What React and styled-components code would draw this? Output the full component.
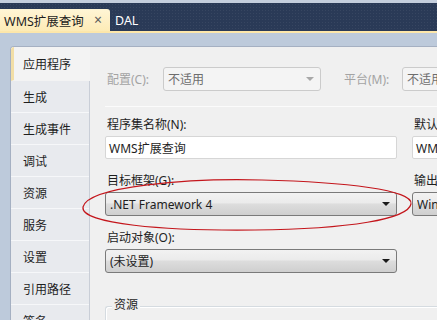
import React from 'react';
import styled, { createGlobalStyle } from 'styled-components';

const GlobalStyle = createGlobalStyle`
	html, body {
		margin: 0;
		padding: 0;
		overflow: hidden;
		background: #bdcadb;
	}
	body {
		font-family: "Noto Sans", "Noto Sans CJK SC", sans-serif;
		font-size: 12px;
		color: #1e1e1e;
	}
`;

const Page = styled.div`
	position: relative;
	width: 437px;
	height: 320px;
	overflow: hidden;
	display: flex;
	flex-direction: column;
`;

const TopStrip = styled.div`
	height: 3px;
	flex-shrink: 0;
	background: #c4cedd;
`;

const TabBar = styled.div`
	height: 28px;
	flex-shrink: 0;
	background-color: #2a3a57;
	background-image: radial-gradient(rgba(255,255,255,0.06) 0.6px, transparent 0.8px);
	background-size: 3px 3px;
	display: flex;
	align-items: flex-end;
`;

const DocTab = styled.div`
	height: 22px;
	display: flex;
	align-items: center;
	padding: ${p => (p.$active ? '0 8px 0 4px' : '0 5px')};
	width: ${p => (p.$active ? '98px' : 'auto')};
	color: ${p => (p.$active ? '#1e1e1e' : '#ffffff')};
	background: ${p => (p.$active ? 'linear-gradient(#fff5d6, #fdebb6)' : 'transparent')};
	border-top-right-radius: ${p => (p.$active ? '3px' : '0')};
	font-size: 12.5px;
	white-space: nowrap;
`;

const Close = styled.span`
	margin-left: auto;
	color: #5a5a5a;
	font-size: 14px;
	line-height: 1;
`;

const TabRule = styled.div`
	height: 2px;
	flex-shrink: 0;
	background: #fde7aa;
`;

const Band = styled.div`
	height: 13px;
	flex-shrink: 0;
	background: #bdcadb;
`;

const Body = styled.div`
	flex: 1;
	min-height: 0;
	display: flex;
	padding-left: 10px;
	background: #bdcadb;
`;

const Panel = styled.div`
	flex: 1;
	display: flex;
	background: #f0f0f0;
	border-top: 1px solid #a5b0c2;
	border-left: 1px solid #a5b0c2;
	border-top-left-radius: 4px;
	overflow: hidden;
`;

const Sidebar = styled.div`
	width: 78px;
	flex-shrink: 0;
	display: flex;
	flex-direction: column;
	background: #e6e9ee;
	border-right: 1px solid #c9ced7;
`;

const SideItem = styled.div`
	height: ${p => (p.$selected ? '33px' : '31px')};
	flex-shrink: 0;
	display: flex;
	align-items: center;
	padding-left: ${p => (p.$selected ? '9px' : '12px')};
	background: ${p => (p.$selected ? '#f3f3f3' : '#e8eaee')};
	border-left: ${p => (p.$selected ? '3px solid #f2dea6' : '0')};
	border-bottom: 1px solid ${p => (p.$selected ? '#f3f3f3' : '#f6f7f9')};
	margin-right: ${p => (p.$selected ? '-1px' : '0')};
	font-size: 12px;
	white-space: nowrap;
`;

const Content = styled.div`
	flex: 1;
	min-width: 0;
	padding: 20px 0 0 15px;
	display: flex;
	flex-direction: column;
`;

const TopRow = styled.div`
	display: flex;
	align-items: center;
	white-space: nowrap;
`;

const DimLabel = styled.span`
	color: #a3a3a3;
	width: ${p => p.$w}px;
	padding-left: 2px;
	flex-shrink: 0;
`;

const Combo = styled.div`
	box-sizing: border-box;
	height: 24px;
	width: ${p => (p.$w ? `${p.$w}px` : '100%')};
	flex-shrink: 0;
	display: flex;
	align-items: center;
	padding: 0 6px 0 4px;
	border-radius: 3px;
	border: 1px solid ${p => (p.$disabled ? '#cbcbcb' : '#7a7a7a')};
	background: ${p => (p.$disabled ? '#f4f4f4' : 'linear-gradient(#f2f2f2 0%, #ebebeb 45%, #dddddd 50%, #cfcfcf 100%)')};
	color: ${p => (p.$disabled ? '#6d6d6d' : '#1e1e1e')};
	white-space: nowrap;
	overflow: hidden;
`;

const ComboText = styled.span`
	flex: 1;
	overflow: hidden;
`;

const Arrow = styled.span`
	width: 0;
	height: 0;
	margin-left: 4px;
	border-left: 4px solid transparent;
	border-right: 4px solid transparent;
	border-top: 4px solid ${p => (p.$disabled ? '#a8a8a8' : '#1a1a1a')};
`;

const Divider = styled.div`
	height: 1px;
	margin-top: 15px;
	background: #d5d5d5;
	border-bottom: 1px solid #fbfbfb;
`;

const Grid = styled.div`
	display: grid;
	grid-template-columns: 292px 200px;
	column-gap: 15px;
	row-gap: 13px;
	margin-top: 9px;
`;

const Field = styled.div`
	display: flex;
	flex-direction: column;
	gap: 3px;
	min-width: 0;
`;

const Label = styled.div`
	line-height: 17px;
	padding-left: 2px;
	white-space: nowrap;
`;

const TextBox = styled.div`
	box-sizing: border-box;
	height: 23px;
	display: flex;
	align-items: center;
	padding-left: 3px;
	background: #ffffff;
	border: 1px solid #d6d6d6;
	border-radius: 2px;
	white-space: nowrap;
	overflow: hidden;
`;

const GroupBox = styled.div`
	margin-top: 33px;
	height: 40px;
	flex-shrink: 0;
	border: 1px solid #d5dbe0;
	border-right: 0;
	border-radius: 3px 0 0 0;
	box-shadow: inset 1px 1px 0 #ffffff;
	position: relative;
`;

const Legend = styled.span`
	position: absolute;
	top: -10px;
	left: 6px;
	padding: 0 2px;
	background: #f0f0f0;
	line-height: 16px;
`;

const Annotation = styled.svg`
	position: absolute;
	left: 0;
	top: 0;
	pointer-events: none;
`;

const sections = ['应用程序', '生成', '生成事件', '调试', '资源', '服务', '设置', '引用路径', '签名'];

const App = () => {
	return (
		<>
			<GlobalStyle />
			<Page>
				<TopStrip />
				<TabBar>
					<DocTab $active>WMS扩展查询<Close>×</Close></DocTab>
					<DocTab>DAL</DocTab>
				</TabBar>
				<TabRule />
				<Band />
				<Body>
					<Panel>
						<Sidebar>
							{sections.map((s, i) => (
								<SideItem key={s} $selected={i === 0}>{s}</SideItem>
							))}
						</Sidebar>
						<Content>
							<TopRow>
								<DimLabel $w={56}>配置(C):</DimLabel>
								<Combo $w={158} $disabled>
									<ComboText>不适用</ComboText>
									<Arrow $disabled />
								</Combo>
								<DimLabel $w={58} style={{ marginLeft: 21 }}>平台(M):</DimLabel>
								<Combo $w={120} $disabled>
									<ComboText>不适用</ComboText>
									<Arrow $disabled />
								</Combo>
							</TopRow>
							<Divider />
							<Grid>
								<Field>
									<Label>程序集名称(N):</Label>
									<TextBox>WMS扩展查询</TextBox>
								</Field>
								<Field>
									<Label>默认命名空间(L):</Label>
									<TextBox>WMS扩展查询</TextBox>
								</Field>
								<Field>
									<Label>目标框架(G):</Label>
									<Combo>
										<ComboText>.NET Framework 4</ComboText>
										<Arrow />
									</Combo>
								</Field>
								<Field>
									<Label>输出类型(U):</Label>
									<Combo>
										<ComboText>Windows 应用程序</ComboText>
										<Arrow />
									</Combo>
								</Field>
								<Field>
									<Label>启动对象(O):</Label>
									<Combo>
										<ComboText>(未设置)</ComboText>
										<Arrow />
									</Combo>
								</Field>
							</Grid>
							<GroupBox>
								<Legend>资源</Legend>
							</GroupBox>
						</Content>
					</Panel>
				</Body>
				<Annotation width="437" height="320" viewBox="0 0 437 320">
					<path
						d="M83,207 C88,186 190,178 262,180 C345,182 414,190 411,204 C408,219 350,229 255,230 C165,231 80,224 83,207 Z"
						fill="none"
						stroke="#c4161c"
						strokeWidth="1.2"
					/>
				</Annotation>
			</Page>
		</>
	);
};

export default App;
